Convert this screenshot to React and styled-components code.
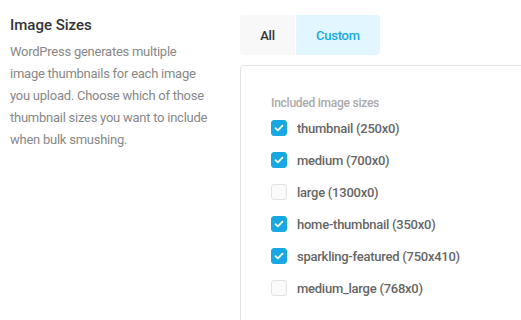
import React from 'react';
import styled, { createGlobalStyle } from 'styled-components';

const GlobalStyle = createGlobalStyle`
  body {
    margin: 0;
    background: #fff;
    font-family: Roboto, "Liberation Sans", sans-serif;
    letter-spacing: -0.25px;
    overflow: hidden;
  }
`;

const Page = styled.div`
  display: flex;
  gap: 30px;
  padding: 15px 0 0 10px;
  width: 521px;
  height: 320px;
  box-sizing: border-box;
  overflow: hidden;
`;

const Intro = styled.div`
  width: 200px;
  flex-shrink: 0;
`;

const Title = styled.h3`
  margin: 0 0 6px;
  font-size: 15px;
  line-height: 20px;
  font-weight: 500;
  letter-spacing: 0;
  color: #333;
`;

const Description = styled.p`
  margin: 0;
  font-size: 13px;
  line-height: 22px;
  font-weight: 400;
  color: #888;
`;

const Settings = styled.div`
  flex: 1;
  display: flex;
  flex-direction: column;
  gap: 10px;
  min-width: 0;
`;

const Tabs = styled.div`
  display: flex;
  flex-shrink: 0;
  align-self: flex-start;
  border-radius: 4px;
  overflow: hidden;
  gap: 1px;
`;

const Tab = styled.button`
  border: 0;
  height: 40px;
  padding: 0 20px;
  min-width: ${p => (p.$active ? '83px' : '55px')};
  background: ${p => (p.$active ? '#e1f6ff' : '#f8f8f8')};
  color: ${p => (p.$active ? '#17a8e3' : '#333')};
  font-family: inherit;
  font-size: 13px;
  font-weight: 500;
  letter-spacing: -0.25px;
  cursor: pointer;
`;

const Panel = styled.div`
  flex-shrink: 0;
  border: 1px solid #e6e6e6;
  border-radius: 4px;
  margin-right: -10px;
  padding: 29px 30px 30px;
  min-height: 300px;
`;

const PanelLabel = styled.div`
  font-size: 12px;
  line-height: 16px;
  font-weight: 500;
  color: #aaa;
  margin-bottom: 1px;
`;

const Option = styled.label`
  display: flex;
  align-items: center;
  gap: 10px;
  height: 32px;
  font-size: 13px;
  font-weight: 500;
  color: #666;
`;

const Box = styled.span`
  width: 16px;
  height: 16px;
  box-sizing: border-box;
  border-radius: 3px;
  display: flex;
  align-items: center;
  justify-content: center;
  background: ${p => (p.$checked ? '#17a8e3' : '#fafafa')};
  border: 1px solid ${p => (p.$checked ? '#17a8e3' : '#e2e2e2')};
`;

const sizes = [
  { name: 'thumbnail (250x0)', on: true },
  { name: 'medium (700x0)', on: true },
  { name: 'large (1300x0)', on: false },
  { name: 'home-thumbnail (350x0)', on: true },
  { name: 'sparkling-featured (750x410)', on: true },
  { name: 'medium_large (768x0)', on: false },
];

const Check = () => (
  <svg width="10" height="8" viewBox="0 0 10 8" fill="none">
    <path d="M1.5 4.2L3.8 6.3L8.5 1.7" stroke="#fff" strokeWidth="1.8" strokeLinecap="round" strokeLinejoin="round" />
  </svg>
);

const App = () => {
  return (
    <Page>
      <GlobalStyle />
      <Intro>
        <Title>Image Sizes</Title>
        <Description>
          WordPress generates multiple image thumbnails for each image you upload. Choose which of those
          thumbnail sizes you want to include when bulk smushing.
        </Description>
      </Intro>
      <Settings>
        <Tabs>
          <Tab>All</Tab>
          <Tab $active>Custom</Tab>
        </Tabs>
        <Panel>
          <PanelLabel>Included image sizes</PanelLabel>
          {sizes.map(s => (
            <Option key={s.name}>
              <Box $checked={s.on}>{s.on && <Check />}</Box>
              {s.name}
            </Option>
          ))}
        </Panel>
      </Settings>
    </Page>
  );
};

export default App;
